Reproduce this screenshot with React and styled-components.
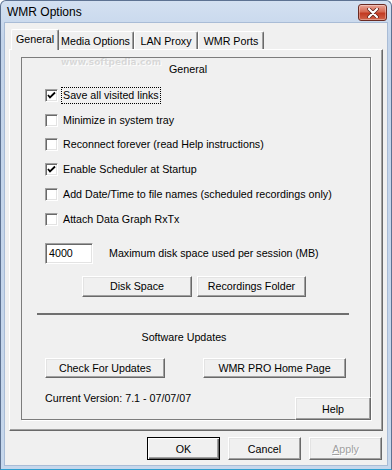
import React from 'react';
import styled, { createGlobalStyle, css } from 'styled-components';

const GlobalStyle = createGlobalStyle`
    html, body {
        margin: 0;
        padding: 0;
        background: #ffffff;
    }
    body {
        font-family: "Liberation Sans", Arial, sans-serif;
        font-size: 10.7px;
        color: #000;
    }
`;

const Window = styled.div`
    position: relative;
    width: 392px;
    height: 470px;
    box-sizing: border-box;
    display: flex;
    flex-direction: column;
    background: linear-gradient(#d3e0f1, #c3d4ea 40px, #c6d7ec);
    border: 1px solid #5d7292;
    border-bottom-color: #2f9fd0;
    border-radius: 6px 6px 0 0;
    overflow: hidden;
`;

const TitleBar = styled.div`
    height: 21px;
    display: flex;
    align-items: center;
    justify-content: space-between;
    padding: 0 4px 0 6px;
    font-size: 12px;
    color: #000;
`;

const CloseButton = styled.div`
    width: 29px;
    height: 17px;
    box-sizing: border-box;
    margin-top: 2px;
    border: 1px solid #6a2a22;
    border-radius: 3px;
    background: linear-gradient(#e8a497, #d66a53 45%, #c23a22 55%, #d0644a);
    box-shadow: inset 0 0 0 1px rgba(255, 255, 255, 0.35);
    display: flex;
    align-items: center;
    justify-content: center;
`;

const Body = styled.div`
    flex: 1;
    margin: 0 3px 3px 3px;
    background: #f0f0f0;
    border: 1px solid #a9bcd6;
    padding: 6px 4px 0 4px;
    display: flex;
    flex-direction: column;
`;

const TabStrip = styled.div`
    display: flex;
    align-items: flex-end;
    height: 20px;
    padding-left: 4px;
    position: relative;
    z-index: 1;
`;

const Tab = styled.div`
    width: ${({ $w }) => $w}px;
    height: 18px;
    box-sizing: border-box;
    background: #f0f0f0;
    border-top: 1px solid #fff;
    border-left: 1px solid #fff;
    border-right: 1px solid #696969;
    box-shadow: inset -1px 0 #a0a0a0;
    border-radius: 2px 2px 0 0;
    display: flex;
    align-items: center;
    justify-content: center;
    padding-top: 1px;
    white-space: nowrap;
    ${({ $active }) => $active && css`
        height: 21px;
        margin: 0 -2px -1px -2px;
        padding-bottom: 3px;
        position: relative;
        z-index: 2;
    `}
`;

const Panel = styled.div`
    height: 382px;
    box-sizing: border-box;
    border: 1px solid;
    border-color: #fff #696969 #696969 #fff;
    box-shadow: inset -1px -1px #a0a0a0;
    padding: 7px 11px 10px 11px;
    display: flex;
`;

const Group = styled.div`
    position: relative;
    flex: 1;
    border: 1px solid #7c7c7c;
    box-shadow: 1px 1px 0 #fff;
    padding: 0 23px;
    display: flex;
    flex-direction: column;
`;

const GroupTitle = styled.div`
    margin-top: ${({ $mt }) => $mt}px;
    line-height: 13px;
    text-align: center;
    padding-right: ${({ $shift }) => $shift}px;
    flex: none;
`;

const CheckList = styled.div`
    margin-top: 7px;
    display: flex;
    flex-direction: column;
    flex: none;
`;

const CheckRow = styled.label`
    height: 24.8px;
    flex: none;
    display: flex;
    align-items: center;
    gap: 4px;
`;

const CheckBox = styled.span`
    width: 13px;
    height: 13px;
    box-sizing: border-box;
    background: #fff;
    border: 1px solid;
    border-color: #a0a0a0 #fff #fff #a0a0a0;
    box-shadow: inset 1px 1px #696969, inset -1px -1px #e3e3e3;
    display: flex;
    align-items: center;
    justify-content: center;
    flex: none;
`;

const CheckText = styled.span`
    padding: 1px 1px;
    line-height: 13px;
    outline: ${({ $focus }) => ($focus ? '1px dotted #000' : 'none')};
    white-space: nowrap;
`;

const FieldRow = styled.div`
    margin-top: 11px;
    display: flex;
    align-items: center;
    gap: 16px;
    flex: none;
`;

const TextInput = styled.div`
    width: 48px;
    height: 21px;
    box-sizing: border-box;
    background: #fff;
    border: 1px solid;
    border-color: #a0a0a0 #fff #fff #a0a0a0;
    box-shadow: inset 1px 1px #696969, inset -1px -1px #e3e3e3;
    display: flex;
    align-items: center;
    padding-left: 3px;
`;

const ButtonRow = styled.div`
    margin-top: ${({ $mt }) => $mt}px;
    margin-left: ${({ $ml }) => $ml || 0}px;
    display: flex;
    gap: ${({ $gap }) => $gap}px;
    flex: none;
`;

const Button = styled.div`
    width: ${({ $w }) => $w}px;
    height: ${({ $h }) => $h || 21}px;
    box-sizing: border-box;
    background: #f0f0f0;
    border: 1px solid;
    border-color: #fff #696969 #696969 #fff;
    box-shadow: inset -1px -1px #a0a0a0, inset 1px 1px #e3e3e3;
    display: flex;
    align-items: center;
    justify-content: center;
    white-space: nowrap;
    color: ${({ $disabled }) => ($disabled ? '#a0a0a0' : '#000')};
    text-shadow: ${({ $disabled }) => ($disabled ? '1px 1px #fff' : 'none')};
    ${({ $default }) => $default && css`
        border-color: #000;
        box-shadow: inset 1px 1px #fff, inset -1px -1px #696969, inset -2px -2px #a0a0a0;
    `}
`;

const HelpButton = styled(Button)`
    position: absolute;
    right: -1px;
    bottom: -1px;
`;

const Separator = styled.div`
    margin: 16px -2px 0 -8px;
    height: 2px;
    background: #6f6f6f;
    flex: none;
`;

const VersionText = styled.div`
    margin-top: 14px;
    line-height: 13px;
    flex: none;
`;

const Footer = styled.div`
    display: flex;
    justify-content: flex-end;
    gap: 8px;
    margin-top: 6px;
    padding-right: 1px;
`;

const Watermark = styled.div`
    position: absolute;
    pointer-events: none;
    left: 60px;
    top: 56px;
    font-family: "DejaVu Sans", sans-serif;
    font-weight: bold;
    font-size: 9px;
    color: rgba(160, 160, 160, 0.35);
    text-shadow: 1px 1px rgba(255, 255, 255, 0.8);
    white-space: nowrap;
`;

const CheckMark = () => (
    <svg width="9" height="9" viewBox="0 0 9 9">
        <path d="M1 4 L3 6.5 L8 1.5" fill="none" stroke="#000" strokeWidth="1.8" />
    </svg>
);

const CloseIcon = () => (
    <svg width="12" height="10" viewBox="0 0 12 10">
        <path d="M2 1 L10 9 M10 1 L2 9" stroke="#5a1f18" strokeWidth="3.6" strokeLinecap="round" />
        <path d="M2 1 L10 9 M10 1 L2 9" stroke="#fff" strokeWidth="2.2" strokeLinecap="round" />
    </svg>
);

const options = [
    { label: 'Save all visited links', checked: true, focus: true },
    { label: 'Minimize in system tray', checked: false },
    { label: 'Reconnect forever (read Help instructions)', checked: false },
    { label: 'Enable Scheduler at Startup', checked: true },
    { label: 'Add Date/Time to file names (scheduled recordings only)', checked: false },
    { label: 'Attach Data Graph RxTx', checked: false },
];

const tabs = [
    { name: 'General', w: 48, active: true },
    { name: 'Media Options', w: 77 },
    { name: 'LAN Proxy', w: 64 },
    { name: 'WMR Ports', w: 66 },
];

export default function App() {
    return (
        <>
            <GlobalStyle />
            <Window>
                <TitleBar>
                    <span>WMR Options</span>
                    <CloseButton><CloseIcon /></CloseButton>
                </TitleBar>
                <Body>
                    <TabStrip>
                        {tabs.map(t => (
                            <Tab key={t.name} $w={t.w} $active={t.active}>{t.name}</Tab>
                        ))}
                    </TabStrip>
                    <Panel>
                        <Group>
                            <GroupTitle $mt={5} $shift={16}>General</GroupTitle>
                            <CheckList>
                                {options.map(o => (
                                    <CheckRow key={o.label}>
                                        <CheckBox>{o.checked && <CheckMark />}</CheckBox>
                                        <CheckText $focus={o.focus}>{o.label}</CheckText>
                                    </CheckRow>
                                ))}
                            </CheckList>
                            <FieldRow>
                                <TextInput>4000</TextInput>
                                <span>Maximum disk space used per session (MB)</span>
                            </FieldRow>
                            <ButtonRow $mt={12} $ml={37} $gap={5}>
                                <Button $w={110}>Disk Space</Button>
                                <Button $w={109}>Recordings Folder</Button>
                            </ButtonRow>
                            <Separator />
                            <GroupTitle $mt={16} $shift={24}>Software Updates</GroupTitle>
                            <ButtonRow $mt={14} $gap={38}>
                                <Button $w={120} $h={20}>Check For Updates</Button>
                                <Button $w={143} $h={20}>WMR PRO Home Page</Button>
                            </ButtonRow>
                            <VersionText>Current Version: 7.1 - 07/07/07</VersionText>
                            <HelpButton $w={76} $h={23}>Help</HelpButton>
                        </Group>
                    </Panel>
                    <Footer>
                        <Button $w={73} $h={23} $default>OK</Button>
                        <Button $w={73} $h={23}>Cancel</Button>
                        <Button $w={73} $h={23} $disabled><u>A</u>pply</Button>
                    </Footer>
                </Body>
                <Watermark>www.softpedia.com</Watermark>
            </Window>
        </>
    );
}
